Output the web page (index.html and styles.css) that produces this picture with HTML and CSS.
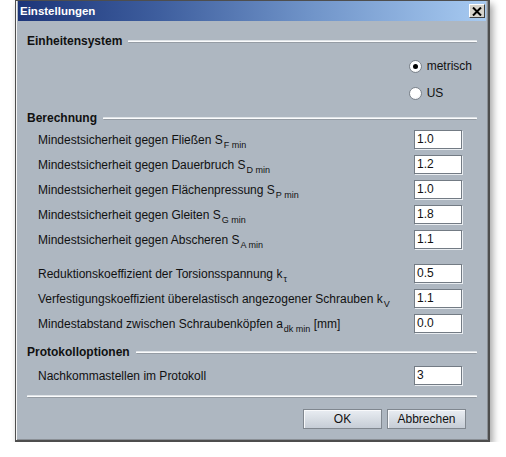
FILE: index.html
```html
<!DOCTYPE html>
<html lang="de">
<head>
<meta charset="utf-8">
<title>Einstellungen</title>
<link rel="stylesheet" href="styles.css">
</head>
<body>
<div class="window">
  <div class="titlebar">
    <span class="title">Einstellungen</span>
    <span class="close"><svg width="10" height="9" viewBox="0 0 10 9"><path d="M1 0.5 L9 8.5 M9 0.5 L1 8.5" stroke="#000" stroke-width="2"/></svg></span>
  </div>
  <div class="content">
    <div class="head h1"><span>Einheitensystem</span><i class="rule"></i></div>
    <div class="radios">
      <div class="radio r1"><span class="dot on"></span><span>metrisch</span></div>
      <div class="radio r2"><span class="dot"></span><span>US</span></div>
    </div>
    <div class="head h2"><span>Berechnung</span><i class="rule"></i></div>
    <div class="row first"><span class="lbl">Mindestsicherheit gegen Fließen S<sub>F min</sub></span><span class="field">1.0</span></div>
    <div class="row"><span class="lbl">Mindestsicherheit gegen Dauerbruch S<sub>D min</sub></span><span class="field">1.2</span></div>
    <div class="row"><span class="lbl">Mindestsicherheit gegen Flächenpressung S<sub>P min</sub></span><span class="field">1.0</span></div>
    <div class="row"><span class="lbl">Mindestsicherheit gegen Gleiten S<sub>G min</sub></span><span class="field">1.8</span></div>
    <div class="row"><span class="lbl">Mindestsicherheit gegen Abscheren S<sub>A min</sub></span><span class="field">1.1</span></div>
    <div class="row group"><span class="lbl">Reduktionskoeffizient der Torsionsspannung k<sub>τ</sub></span><span class="field">0.5</span></div>
    <div class="row"><span class="lbl">Verfestigungskoeffizient überelastisch angezogener Schrauben k<sub>V</sub></span><span class="field">1.1</span></div>
    <div class="row"><span class="lbl">Mindestabstand zwischen Schraubenköpfen a<sub>dk min</sub> [mm]</span><span class="field">0.0</span></div>
    <div class="head h3"><span>Protokolloptionen</span><i class="rule"></i></div>
    <div class="row single"><span class="lbl">Nachkommastellen im Protokoll</span><span class="field">3</span></div>
    <i class="rule sep"></i>
    <div class="buttons">
      <span class="btn">OK</span>
      <span class="btn">Abbrechen</span>
    </div>
  </div>
</div>
</body>
</html>
```

FILE: styles.css
```css
html, body {
  margin: 0;
  padding: 0;
  background: #ffffff;
}
body {
  font-family: "Liberation Sans", Arial, sans-serif;
  font-size: 12px;
  color: #111;
}
.window {
  margin-left: 15px;
  width: 475px;
  height: 442px;
  box-sizing: border-box;
  border: 1px solid #4e4e4e;
  border-bottom-width: 2px;
  border-right-width: 2px;
  background: #aeb7c1;
  box-shadow: 3px 4px 7px rgba(0, 0, 0, 0.35), inset 1px 0 0 #f4f4f4, inset -1px -1px 0 #8a8f95;
  display: flex;
  flex-direction: column;
}
.titlebar {
  margin: 0 2px 0 2px;
  height: 20px;
  background: linear-gradient(to right, #1c3579 0%, #3e5e9e 30%, #6f93c8 62%, #a7caf1 100%);
  display: flex;
  align-items: center;
  justify-content: space-between;
  padding-left: 2px;
}
.title {
  color: #fff;
  font-weight: bold;
  font-size: 11.5px;
}
.close {
  width: 14px;
  height: 12px;
  margin-right: 1px;
  background: #d6d3cc;
  border: 1px solid;
  border-color: #fff #404040 #404040 #fff;
  display: flex;
  align-items: center;
  justify-content: center;
}
.close svg { display: block; }
.content {
  padding: 0 11px;
  display: flex;
  flex-direction: column;
}
.head {
  height: 14px;
  display: flex;
  align-items: center;
  gap: 6px;
  font-weight: bold;
  font-size: 12px;
}
.head .rule { flex: 1; }
.rule {
  display: block;
  height: 1px;
  background: #fbfcfd;
  border-top: 1px solid #dfe3e7;
  border-bottom: 1px solid #959ca4;
  border-radius: 1px;
}
.h1 { margin-top: 13px; }
.h2 { margin-top: 9px; }
.h3 { margin-top: 12px; }
.radios {
  align-self: flex-end;
  margin-right: 5px;
  display: flex;
  flex-direction: column;
  gap: 9px;
  margin-top: 9px;
}
.radio {
  height: 18px;
  display: flex;
  align-items: center;
  gap: 5px;
  font-size: 12px;
}
.dot {
  width: 11px;
  height: 11px;
  border-radius: 50%;
  background: radial-gradient(circle at 40% 35%, #ffffff 55%, #dfe3e8 100%);
  border: 1px solid #7c838b;
  display: flex;
  align-items: center;
  justify-content: center;
}
.dot.on::after {
  content: "";
  width: 5px;
  height: 5px;
  border-radius: 50%;
  background: #000;
}
.row {
  height: 19px;
  display: flex;
  align-items: center;
  justify-content: space-between;
  padding: 0 15px 0 11px;
  margin-top: 6px;
}
.row.first { margin-top: 5px; }
.row.group { margin-top: 15px; }
.row.single { margin-top: 7px; }
.lbl {
  white-space: nowrap;
  line-height: 14px;
}
.lbl sub {
  font-size: 9px;
  vertical-align: -4px;
  line-height: 0;
  margin-left: 1px;
}
.field {
  width: 46px;
  height: 17px;
  background: #fff;
  border: 1px solid #737b84;
  box-shadow: 1px 1px 0 #e9edf1;
  line-height: 17px;
  padding-left: 2px;
  box-sizing: content-box;
  width: 44px;
}
.sep {
  margin-top: 10px;
}
.buttons {
  margin-top: 11px;
  display: flex;
  justify-content: flex-end;
  gap: 5px;
  padding-right: 11px;
}
.btn {
  width: 77px;
  height: 18px;
  border: 1px solid #80878f;
  background: linear-gradient(#e9edf2, #c6cdd6);
  box-shadow: inset 1px 1px 0 #f8f9fb;
  display: flex;
  align-items: center;
  justify-content: center;
  font-size: 12px;
}
```
